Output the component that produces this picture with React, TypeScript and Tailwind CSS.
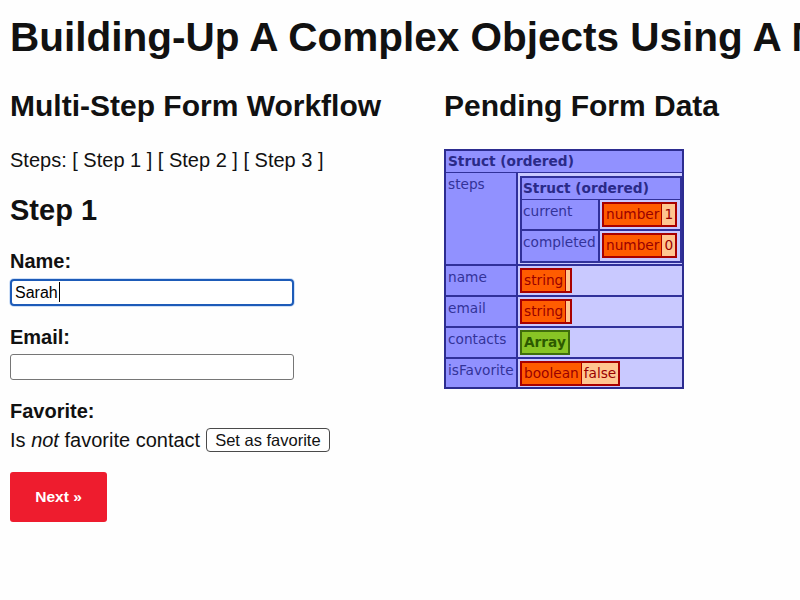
import React from "react";

const dumpFont = { fontFamily: "'DejaVu Sans', Verdana, sans-serif" };

function TypedBox({ type, value }: { type: string; value: string }) {
  return (
    <span className="inline-flex h-[25px] border-2 border-[#a80000] leading-[21px] text-[#990000]">
      <span className="bg-[#ff5c00] px-[2px]">{type}</span>
      <span className="min-w-[4px] border-l border-[#a80000] bg-[#ffc690] px-[2px]">{value}</span>
    </span>
  );
}

function ArrayBox() {
  return (
    <span className="inline-flex h-[25px] items-center border-2 border-[#3f6e0c] bg-[#88c425] px-[2px] font-bold leading-[21px] text-[#2d5a00]">
      Array
    </span>
  );
}

function InnerStruct() {
  return (
    <div className="w-[162px] border-2 border-[#30309a] bg-[#c9c9ff]">
      <div className="h-[22px] border-b border-[#30309a] bg-[#9191ff] pl-[1px] font-bold leading-[21px] text-[#2a2a88]">
        Struct (ordered)
      </div>
      <div className="flex h-[31px] border-b-2 border-[#30309a]">
        <div className="w-[78px] shrink-0 border-r-2 border-[#30309a] bg-[#9191ff] pl-[1px] pt-[3px] leading-[16px]">current</div>
        <div className="pl-[2px] pt-[2px]">
          <TypedBox type="number" value="1" />
        </div>
      </div>
      <div className="flex h-[30px]">
        <div className="w-[78px] shrink-0 border-r-2 border-[#30309a] bg-[#9191ff] pl-[1px] pt-[3px] leading-[16px]">completed</div>
        <div className="pl-[2px] pt-[2px]">
          <TypedBox type="number" value="0" />
        </div>
      </div>
    </div>
  );
}

function Row({ k, children, last, h }: { k: string; children: React.ReactNode; last?: boolean; h: string }) {
  return (
    <div className={`flex ${h} ${last ? "" : "border-b-2 border-[#30309a]"}`}>
      <div className="w-[72px] shrink-0 border-r-2 border-[#30309a] bg-[#9191ff] pl-[2px] pt-[3px] leading-[16px]">{k}</div>
      <div className="pl-[2px] pt-[2px]">{children}</div>
    </div>
  );
}

function Dump() {
  return (
    <div style={dumpFont} className="w-[240px] border-2 border-[#2c2c90] bg-[#c9c9ff] text-[13.7px] text-[#333399]">
      <div className="h-[22px] border-b border-[#30309a] bg-[#9191ff] pl-[2px] font-bold leading-[21px] text-[#2a2a88]">
        Struct (ordered)
      </div>
      <div className="flex h-[93px] border-b-2 border-[#30309a]">
        <div className="w-[72px] shrink-0 border-r-2 border-[#30309a] bg-[#9191ff] pl-[2px] pt-[3px] leading-[16px]">steps</div>
        <div className="pl-[2px] pt-[3px]">
          <InnerStruct />
        </div>
      </div>
      <Row k="name" h="h-[31px]">
        <TypedBox type="string" value="" />
      </Row>
      <Row k="email" h="h-[31px]">
        <TypedBox type="string" value="" />
      </Row>
      <Row k="contacts" h="h-[31px]">
        <ArrayBox />
      </Row>
      <Row k="isFavorite" h="h-[28px]" last>
        <TypedBox type="boolean" value="false" />
      </Row>
    </div>
  );
}

export default function App() {
  return (
    <div
      className="h-[600px] w-[800px] overflow-hidden bg-[#fefefe] pl-[10px] pt-[14px] text-[#111111]"
      style={{ fontFamily: "'Liberation Sans', Arial, sans-serif" }}
    >
      <h1 className="whitespace-nowrap text-[40.5px] font-bold leading-[46px]">
        Building-Up A Complex Objects Using A Multi-Step Form Workflow
      </h1>
      <div className="mt-[28px] flex">
        <div className="w-[434px] shrink-0">
          <h2 className="text-[30px] font-bold leading-[36px]">Multi-Step Form Workflow</h2>
          <p className="mt-[24px] text-[20px] leading-[24px]">Steps: [ Step 1 ] [ Step 2 ] [ Step 3 ]</p>
          <h3 className="mt-[21px] text-[29px] font-bold leading-[34px]">Step 1</h3>
          <label className="mt-[22px] block text-[20px] font-bold leading-[24px]">Name:</label>
          <div className="relative mt-[6px] h-[27px] w-[284px]">
            <input
              readOnly
              value="Sarah"
              className="h-[27px] w-[284px] rounded-[4px] border-2 border-[#1d5bb8] bg-white pl-[3px] text-[16px] text-black shadow-[0_0_0_1px_#cfe0f7] outline-none"
            />
            <span className="absolute left-[49px] top-[3px] h-[20px] w-px bg-black" />
          </div>
          <label className="mt-[19px] block text-[20px] font-bold leading-[24px]">Email:</label>
          <input
            readOnly
            value=""
            className="mt-[5px] block h-[26px] w-[284px] rounded-[3px] border border-[#767676] bg-white px-[3px] text-[16px] outline-none"
          />
          <label className="mt-[19px] block text-[20px] font-bold leading-[24px]">Favorite:</label>
          <div className="mt-[5px] flex h-[24px] items-center gap-[6px] text-[20px] leading-[24px]">
            <span>
              Is <em>not</em> favorite contact
            </span>
            <button className="h-[24px] rounded-[4px] border border-[#4a4a4a] bg-white px-[8px] text-[16.5px] leading-[20px] text-[#111111]">
              Set as favorite
            </button>
          </div>
          <button className="mt-[20px] h-[50px] w-[97px] rounded-[3px] bg-[#ee1c2e] text-[15.5px] font-bold text-white">
            Next »
          </button>
        </div>
        <div>
          <h2 className="text-[30px] font-bold leading-[36px]">Pending Form Data</h2>
          <div className="mt-[25px]">
            <Dump />
          </div>
        </div>
      </div>
    </div>
  );
}
